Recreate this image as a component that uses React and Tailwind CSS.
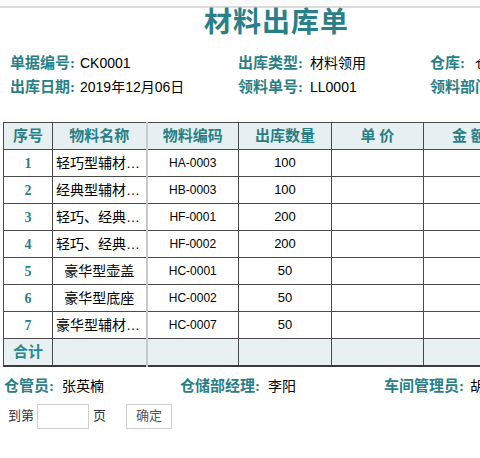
import React from "react";

const serif = { fontFamily: "'Liberation Serif','Noto Sans CJK SC',serif" };
const sans = { fontFamily: "'Liberation Sans','Noto Sans CJK SC',sans-serif" };

const rows = [
  ["1", "轻巧型辅材组合套装", "HA-0003", "100"],
  ["2", "经典型辅材组合套装", "HB-0003", "100"],
  ["3", "轻巧、经典型辅材组合", "HF-0001", "200"],
  ["4", "轻巧、经典型辅材套装", "HF-0002", "200"],
  ["5", "豪华型壶盖", "HC-0001", "50"],
  ["6", "豪华型底座", "HC-0002", "50"],
  ["7", "豪华型辅材组合套装", "HC-0007", "50"],
];

function Label({ children, className = "" }) {
  return (
    <span style={serif} className={"font-bold text-[#2a7f87] text-[15px] whitespace-nowrap " + className}>
      {children}
    </span>
  );
}

function Value({ children }) {
  return (
    <span style={sans} className="text-[14px] text-black whitespace-nowrap">
      {children}
    </span>
  );
}

export default function App() {
  const cell = "border border-[#4a4a4a] h-[27px] p-0";
  const head = "border border-[#4a4a4a] h-[27px] p-0 bg-[#e6eff2] text-[#2a7f87] font-bold text-[15px] text-center";
  return (
    <div className="w-[480px] h-[458px] overflow-hidden bg-[#fbfbfb]">
      <div className="h-[6px]" />
      <div className="w-[600px] bg-white border-t-[2px] border-t-[#dcdcdc] h-[452px]">
        <div className="w-[553px] text-center">
          <div style={serif} className="text-[28px] font-bold leading-[30px] h-[30px] text-[#2a8089] tracking-[1px]">
            材料出库单
          </div>
        </div>

        <div className="mt-[13px] flex flex-col">
          <div className="flex h-[24px] items-center">
            <div className="w-[238px] pl-[10px] flex items-center">
              <Label className="w-[70px]">单据编号:</Label>
              <Value>CK0001</Value>
            </div>
            <div className="w-[192px] flex items-center">
              <Label className="w-[72px]">出库类型:</Label>
              <Value>材料领用</Value>
            </div>
            <div className="flex items-center">
              <Label className="w-[45px]">仓库:</Label>
              <Value>仓库一</Value>
            </div>
          </div>
          <div className="flex h-[24px] items-center">
            <div className="w-[238px] pl-[10px] flex items-center">
              <Label className="w-[70px]">出库日期:</Label>
              <Value>2019年12月06日</Value>
            </div>
            <div className="w-[192px] flex items-center">
              <Label className="w-[72px]">领料单号:</Label>
              <Value>LL0001</Value>
            </div>
            <div className="flex items-center">
              <Label className="w-[75px]">领料部门:</Label>
              <Value>生产部</Value>
            </div>
          </div>
        </div>

        <div className="mt-[23px] pl-[3px]">
          <table className="border-collapse table-fixed w-[560px] border-b-[2px] border-b-[#3a3a3a]">
            <colgroup>
              <col className="w-[49px]" />
              <col className="w-[94px]" />
              <col className="w-[92px]" />
              <col className="w-[93px]" />
              <col className="w-[92px]" />
              <col className="w-[140px]" />
            </colgroup>
            <thead>
              <tr style={serif}>
                <th className={head}>序号</th>
                <th className={head + " border-r-[2px] border-r-[#c9c9c9]"}>物料名称</th>
                <th className={head}>物料编码</th>
                <th className={head}>出库数量</th>
                <th className={head}>单&nbsp;价</th>
                <th className={head + " text-left pl-[28px]"}>金&nbsp;额</th>
              </tr>
            </thead>
            <tbody>
              {rows.map((r) => (
                <tr key={r[0]}>
                  <td style={serif} className={cell + " text-center font-bold text-[#2a7f87] text-[14px]"}>{r[0]}</td>
                  <td style={sans} className={cell + " border-r-[2px] border-r-[#c9c9c9] text-[14px] text-center px-[3px] truncate"}>{r[1]}</td>
                  <td style={sans} className={cell + " text-[12px] text-center"}>{r[2]}</td>
                  <td style={sans} className={cell + " text-[13px] text-center"}>{r[3]}</td>
                  <td className={cell}></td>
                  <td className={cell}></td>
                </tr>
              ))}
              <tr className="bg-[#e8f0f2]">
                <td style={serif} className={cell + " text-[#2a8a90] font-bold text-[15px] text-center"}>合计</td>
                <td className={cell + " border-r-[2px] border-r-[#c9c9c9]"}></td>
                <td className={cell}></td>
                <td className={cell}></td>
                <td className={cell}></td>
                <td className={cell}></td>
              </tr>
            </tbody>
          </table>
        </div>

        <div className="mt-[8px] flex h-[24px] items-center pl-[4px]">
          <div className="w-[176px] flex items-center">
            <Label className="w-[58px]">仓管员:</Label>
            <Value>张英楠</Value>
          </div>
          <div className="w-[204px] flex items-center">
            <Label className="w-[88px]">仓储部经理:</Label>
            <Value>李阳</Value>
          </div>
          <div className="flex items-center">
            <Label className="w-[86px]">车间管理员:</Label>
            <Value>胡明</Value>
          </div>
        </div>

        <div style={sans} className="mt-[5px] flex items-center h-[25px] pl-[8px] text-[13px] text-[#333]">
          <span>到第</span>
          <div className="ml-[3px] w-[52px] h-[25px] border border-[#cfcfcf] bg-white" />
          <span className="ml-[4px]">页</span>
          <div className="ml-[20px] w-[46px] h-[25px] border border-[#cfcfcf] bg-white flex items-center justify-center text-[#555]">
            确定
          </div>
        </div>
      </div>
    </div>
  );
}
